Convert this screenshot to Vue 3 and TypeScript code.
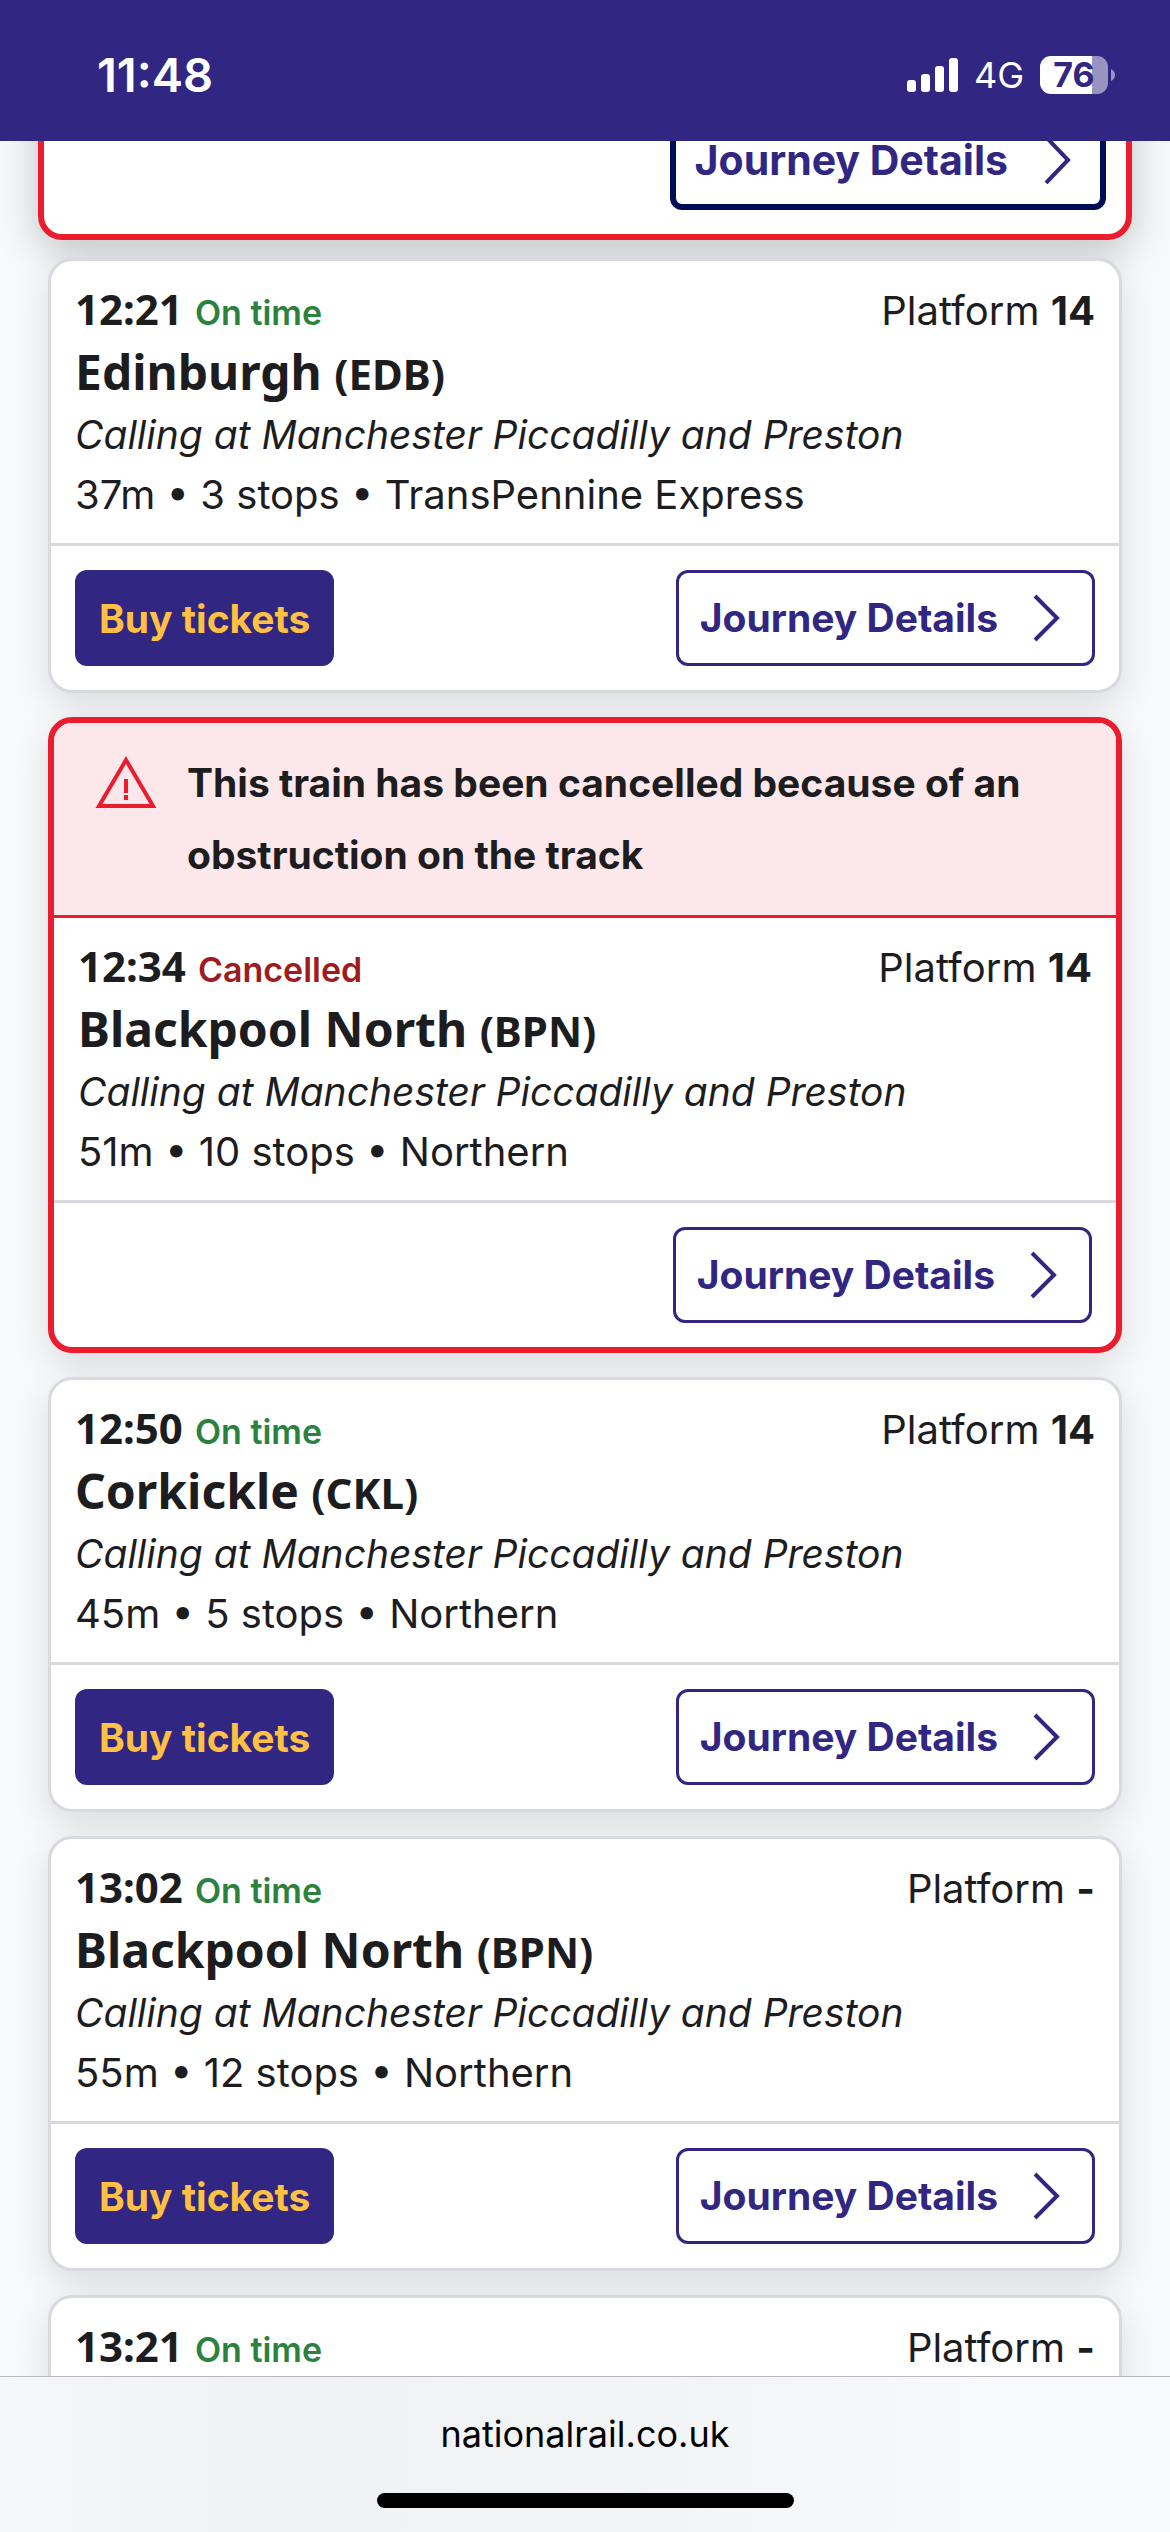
<script setup lang="ts">
interface Departure {
  time: string
  status: string
  cancelled: boolean
  platform: string
  destination?: string
  code?: string
  calling?: string
  summary?: string
  notice?: string
}

const calling = 'Calling at Manchester Piccadilly and Preston'

const departures: Departure[] = [
  { time: '12:21', status: 'On time', cancelled: false, platform: '14', destination: 'Edinburgh', code: 'EDB', calling, summary: '37m • 3 stops • TransPennine Express' },
  { time: '12:34', status: 'Cancelled', cancelled: true, platform: '14', destination: 'Blackpool North', code: 'BPN', calling, summary: '51m • 10 stops • Northern', notice: 'This train has been cancelled because of an obstruction on the track' },
  { time: '12:50', status: 'On time', cancelled: false, platform: '14', destination: 'Corkickle', code: 'CKL', calling, summary: '45m • 5 stops • Northern' },
  { time: '13:02', status: 'On time', cancelled: false, platform: '-', destination: 'Blackpool North', code: 'BPN', calling, summary: '55m • 12 stops • Northern' },
  { time: '13:21', status: 'On time', cancelled: false, platform: '-' },
]
</script>

<template>
  <div class="screen">
    <header class="status-bar">
      <time class="clock">11:48</time>
      <div class="indicators">
        <svg class="signal" viewBox="0 0 51 34" aria-label="Signal strength">
          <rect x="0" y="22" width="9" height="12" rx="3" />
          <rect x="14" y="16" width="9" height="18" rx="3" />
          <rect x="28" y="8" width="9" height="26" rx="3" />
          <rect x="42" y="0" width="9" height="34" rx="3" />
        </svg>
        <span class="network">4G</span>
        <div class="battery">
          <span class="battery-body">76</span>
          <svg class="battery-cap" viewBox="0 0 4 12" aria-hidden="true"><path d="M0 0Q4 2 4 6Q4 10 0 12Z" /></svg>
        </div>
      </div>
    </header>

    <main class="board">
      <article class="card alerted focused">
        <div class="actions">
          <a class="details" href="#details">
            Journey Details
            <svg class="chevron" viewBox="0 0 48 48" aria-hidden="true"><path d="M13 1L35 24L13 47" /></svg>
          </a>
        </div>
      </article>

      <article v-for="train in departures" :key="train.time" class="card" :class="{ alerted: train.cancelled }">
        <div v-if="train.notice" class="notice">
          <svg class="warning" viewBox="0 0 62 54" aria-hidden="true">
            <path class="outline" d="M31 5L58 51H4Z" />
            <path d="M29 24H33V38H29ZM29 40H33V45H29Z" />
          </svg>
          <p>{{ train.notice }}</p>
        </div>
        <div class="summary">
          <div class="row">
            <div class="when">
              <time>{{ train.time }}</time>
              <span class="status" :class="{ late: train.cancelled }">{{ train.status }}</span>
            </div>
            <span class="platform">Platform <b>{{ train.platform }}</b></span>
          </div>
          <template v-if="train.destination">
            <h2>{{ train.destination }} <small>({{ train.code }})</small></h2>
            <p class="calling">{{ train.calling }}</p>
            <p>{{ train.summary }}</p>
          </template>
        </div>
        <div v-if="train.destination" class="actions">
          <button v-if="!train.cancelled" class="buy" type="button">Buy tickets</button>
          <a class="details" href="#details">
            Journey Details
            <svg class="chevron" viewBox="0 0 48 48" aria-hidden="true"><path d="M12 2L34 24L12 46" /></svg>
          </a>
        </div>
      </article>
    </main>

    <footer class="browser-bar">
      <span>nationalrail.co.uk</span>
      <div class="home-indicator"></div>
    </footer>
  </div>
</template>

<style>
body {
  margin: 0;
}
</style>

<style scoped>
.screen {
  display: flex;
  flex-direction: column;
  height: 100vh;
  overflow: hidden;
  background: #f8f9fb;
  color: #1d1d1f;
  font-family: Inter, "Liberation Sans", sans-serif;
  font-size: 40px;
  line-height: 60px;
}

.status-bar {
  display: flex;
  flex: none;
  align-items: center;
  justify-content: space-between;
  box-sizing: border-box;
  height: 141px;
  padding: 8px 55px 0 97px;
  background: #312782;
  color: #fff;
}

.clock {
  font-size: 47px;
  font-weight: 600;
}

.indicators {
  display: flex;
  align-items: center;
  gap: 16px;
}

.signal {
  width: 51px;
  height: 34px;
  fill: #fff;
}

.network {
  font-size: 36px;
}

.battery {
  display: flex;
  align-items: center;
  gap: 3px;
}

.battery-body {
  width: 68px;
  height: 38px;
  border-radius: 11px;
  background: linear-gradient(to right, #fff 52px, #9a93c1 52px);
  color: #312782;
  font-size: 34px;
  font-weight: 700;
  line-height: 38px;
  text-align: center;
}

.battery-cap {
  width: 4px;
  height: 12px;
  fill: #9a93c1;
}

.board {
  display: flex;
  flex: 1;
  flex-direction: column;
  gap: 24px;
  min-height: 0;
  padding: 0 48px;
  overflow: hidden;
}

.card {
  flex: none;
  border: 3px solid #d9dae0;
  border-radius: 24px;
  background: #fff;
  box-shadow: 0 12px 36px rgba(0, 0, 0, 0.12);
}

.alerted {
  border: 6px solid #eb1c2d;
}

.notice {
  display: flex;
  gap: 30px;
  padding: 24px 72px 24px 41px;
  border-bottom: 3px solid #eb1c2d;
  border-radius: 18px 18px 0 0;
  background: #fce8ea;
  font-size: 39px;
  font-weight: 700;
  line-height: 72px;
}

.warning {
  flex: none;
  width: 62px;
  height: 54px;
  margin-top: 8px;
  fill: #eb1c2d;
}

.warning .outline {
  fill: none;
  stroke: #eb1c2d;
  stroke-width: 4;
}

p,
h2 {
  margin: 0;
}

.summary {
  padding: 18px 24px;
  border-bottom: 3px solid #d9dae0;
}

.row,
.actions {
  display: flex;
  justify-content: space-between;
}

.row {
  height: 60px;
}

.when {
  display: flex;
  align-items: baseline;
  gap: 12px;
}

.when time,
h2 {
  font-family: "Noto Sans", "Open Sans", sans-serif;
  font-weight: 700;
}

.when time,
small {
  font-size: 42px;
}

.status {
  color: #2b823f;
  font-size: 34px;
  font-weight: 600;
  line-height: 1;
}

.status.late {
  color: #9d1c20;
}

.platform {
  line-height: 64px;
}

h2 {
  font-size: 48px;
  line-height: 66px;
}

small {
  line-height: 1;
}

.calling {
  font-size: 39px;
  font-style: italic;
}

.actions {
  padding: 24px;
}

.buy,
.details {
  box-sizing: border-box;
  height: 96px;
  border-radius: 12px;
  font-family: inherit;
  font-size: 39px;
  font-weight: 700;
}

.buy {
  padding: 0 24px;
  border: 0;
  background: #312782;
  color: #ffc043;
}

.details {
  display: flex;
  align-items: center;
  gap: 25px;
  margin-left: auto;
  padding: 0 21px;
  border: 3px solid #312782;
  color: #312782;
  text-decoration: none;
}

.chevron {
  width: 48px;
  height: 48px;
  fill: none;
  stroke: #312782;
  stroke-width: 4;
}

/* The focused card grows slightly over the neighbours and is scrolled under the header. */
.focused {
  margin: -61px -10px -6px;
  box-shadow: 0 12px 42px rgba(0, 0, 0, 0.22);
}

.focused .actions {
  padding: 24px 20px;
}

.focused .details {
  height: 100px;
  padding: 0 19px;
  border: 6px solid #000e56;
  font-size: 41px;
}

.browser-bar {
  display: flex;
  flex: none;
  flex-direction: column;
  align-items: center;
  justify-content: space-between;
  box-sizing: border-box;
  height: 156px;
  padding: 27px 0 24px;
  border-top: 1px solid #b9b9be;
  background: linear-gradient(to right, #f6f7f9, #f1f2f4 20%, #f2f3f5 50%, #f8f9fb 85%);
  color: #000;
  font-size: 36px;
}

.home-indicator {
  width: 417px;
  height: 15px;
  border-radius: 8px;
  background: #000;
}
</style>
